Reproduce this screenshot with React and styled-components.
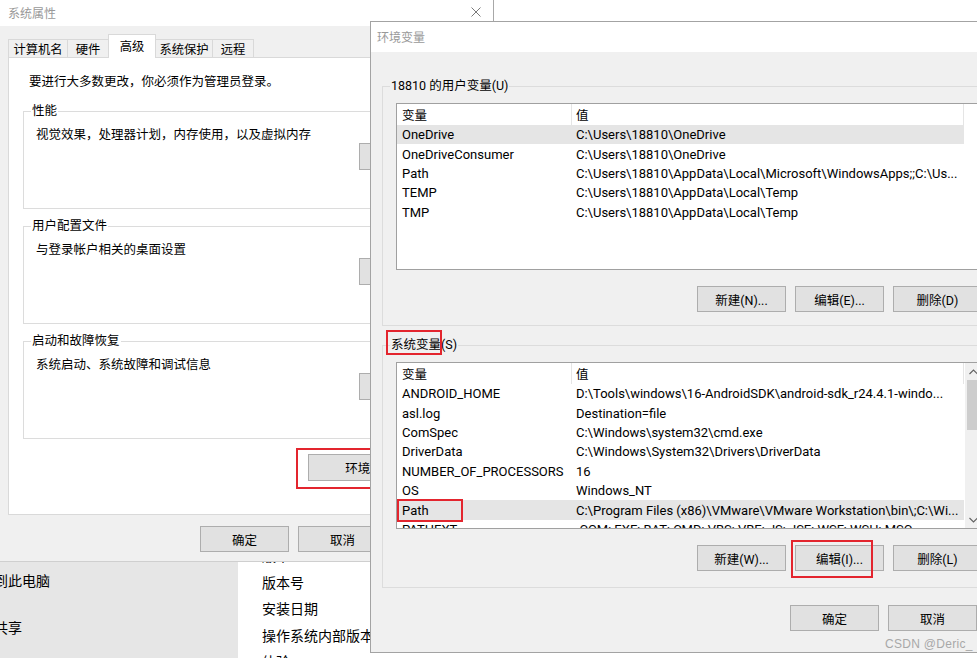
import React from 'react'
import styled, { createGlobalStyle } from 'styled-components'

const GlobalStyle = createGlobalStyle`
  html, body { margin: 0; padding: 0; background: #fff; }
  body { font-family: Roboto, "Noto Sans CJK SC", sans-serif; color: #000; }
`

const RED = '#e3252e'

const Desktop = styled.div`
  position: relative;
  width: 977px;
  height: 658px;
  overflow: hidden;
  background: #fff;
`

/* settings page behind the dialogs */
const SettingsPage = styled.section`
  position: absolute;
  left: 0;
  top: 540px;
  width: 620px;
  height: 118px;
  display: flex;
  font-size: 14px;
  z-index: 0;
`
const Sidebar = styled.nav`
  width: 238px;
  background: #e6e6e6;
  padding-top: 31px;
  overflow: hidden;
`
const NavItem = styled.div`
  margin-left: -34px;
  line-height: 20px;
  margin-bottom: 27px;
  white-space: nowrap;
`
const AboutList = styled.div`
  flex: 1;
  background: #fff;
  padding: 3px 0 0 24px;
`
const AboutItem = styled.div`
  line-height: 26.5px;
  white-space: nowrap;
`

/* shared window parts */
const TitleBar = styled.header`
  flex: none;
  height: ${p => p.$h}px;
  background: #fff;
  display: flex;
  align-items: center;
  justify-content: space-between;
  padding-left: ${p => p.$pl}px;
  padding-bottom: 2px;
  box-sizing: border-box;
  font-size: 12px;
  color: #999;
`
const CloseBox = styled.div`
  width: 34px;
  height: 100%;
  display: flex;
  align-items: center;
  justify-content: center;
`
const PushButton = styled.div`
  box-sizing: border-box;
  width: ${p => p.$w || 89}px;
  height: ${p => p.$h || 26}px;
  flex: none;
  background: #e1e1e1;
  border: 1px solid #adadad;
  display: flex;
  align-items: center;
  justify-content: center;
  font-size: 12.5px;
  white-space: nowrap;
  overflow: hidden;
`
const ButtonRow = styled.div`
  box-sizing: border-box;
  display: flex;
  justify-content: flex-end;
  gap: ${p => p.$gap || 9}px;
  margin-top: ${p => p.$mt || 0}px;
  padding-right: ${p => p.$pr || 0}px;
  width: ${p => (p.$w ? `${p.$w}px` : 'auto')};
`
const Group = styled.fieldset`
  box-sizing: border-box;
  margin: ${p => p.$mt || 0}px 0 0;
  min-width: 0;
  width: ${p => (p.$w ? `${p.$w}px` : 'auto')};
  height: ${p => (p.$h ? `${p.$h}px` : 'auto')};
  border: 1px solid #dcdcdc;
  padding: ${p => p.$pad};
  display: flex;
  flex-direction: column;
`
const Legend = styled.legend`
  margin-left: ${p => p.$ml}px;
  padding: 0 1px;
  font-size: 12.5px;
  line-height: 16px;
  white-space: nowrap;
`
const Mark = styled.span`
  position: relative;
  display: inline-block;
  &::after {
    content: '';
    position: absolute;
    top: ${p => p.$t}px;
    right: ${p => p.$r}px;
    bottom: ${p => p.$b}px;
    left: ${p => p.$l}px;
    border: 2px solid ${RED};
    pointer-events: none;
    z-index: 3;
  }
`

/* system properties window */
const SysWindow = styled.section`
  position: absolute;
  z-index: 1;
  left: 0;
  top: 0;
  width: 494px;
  height: 562px;
  box-sizing: border-box;
  background: #f0f0f0;
  border-right: 1px solid #a8a8a8;
  border-bottom: 1px solid #cfcfcf;
  display: flex;
  flex-direction: column;
`
const SysBody = styled.div`
  padding: 8px 8px 0 8px;
  display: flex;
  flex-direction: column;
`
const TabStrip = styled.div`
  display: flex;
  align-items: flex-end;
  height: 24px;
  margin-bottom: -1px;
  position: relative;
  z-index: 1;
`
const Tab = styled.div`
  box-sizing: border-box;
  width: ${p => p.$w}px;
  height: ${p => (p.$active ? 24 : 18)}px;
  margin-bottom: ${p => (p.$active ? 0 : 1)}px;
  margin-left: -1px;
  &:first-child { margin-left: 0; }
  background: ${p => (p.$active ? '#fff' : '#f0f0f0')};
  border: 1px solid #d9d9d9;
  border-bottom: none;
  font-size: 12.3px;
  display: flex;
  align-items: ${p => (p.$active ? 'flex-start' : 'center')};
  padding-top: ${p => (p.$active ? 2 : 0)}px;
  justify-content: center;
  position: relative;
  z-index: ${p => (p.$active ? 2 : 1)};
`
const TabPanel = styled.div`
  box-sizing: border-box;
  height: 458px;
  background: #fff;
  border: 1px solid #d9d9d9;
  padding: 16px 14px 0 14px;
  display: flex;
  flex-direction: column;
`
const Intro = styled.p`
  margin: 0;
  padding-left: 6px;
  font-size: 12.5px;
  line-height: 16px;
`
const GroupText = styled.div`
  padding-top: 8px;
  font-size: 12.5px;
  line-height: 16px;
`
const GroupButton = styled(PushButton)`
  margin-top: auto;
  align-self: flex-end;
`

/* environment variables window */
const EnvWindow = styled.section`
  position: absolute;
  z-index: 2;
  left: 370px;
  top: 21px;
  width: 640px;
  height: 632px;
  box-sizing: border-box;
  background: #f0f0f0;
  border: 1px solid #a3a3a3;
  display: flex;
  flex-direction: column;
`
const EnvBody = styled.div`
  padding: 26px 0 0 11px;
  display: flex;
  flex-direction: column;
`
const ListBox = styled.div`
  box-sizing: border-box;
  margin-top: 9px;
  height: 167px;
  border: 1px solid #a0a0a0;
  background: #fff;
  display: flex;
  overflow: hidden;
`
const ListMain = styled.div`
  flex: 1;
  min-width: 0;
  overflow: hidden;
`
const Columns = styled.div`
  display: grid;
  grid-template-columns: 175px 392px;
  height: ${p => p.$h}px;
  align-items: center;
  background: ${p => (p.$selected ? '#e5e5e5' : 'transparent')};
  width: 567px;
  font-size: 13px;
`
const HeadCell = styled.div`
  height: 100%;
  box-sizing: border-box;
  border-right: 1px solid #e5e5e5;
  padding-left: ${p => p.$pl}px;
  display: flex;
  align-items: center;
  font-size: 12.5px;
`
const Cell = styled.div`
  padding-left: ${p => p.$pl}px;
  padding-top: 1px;
  white-space: nowrap;
  overflow: ${p => (p.$clip ? 'hidden' : 'visible')};
  line-height: 16px;
`
const ScrollBar = styled.div`
  width: 17px;
  flex: none;
  background: #f0f0f0;
  display: flex;
  flex-direction: column;
`
const ScrollArrow = styled.div`
  height: 17px;
  display: flex;
  align-items: center;
  justify-content: center;
`
const ScrollTrack = styled.div`
  flex: 1;
  padding: 0 2px;
`
const ScrollThumb = styled.div`
  height: 50px;
  background: #cdcdcd;
`
const Watermark = styled.div`
  position: absolute;
  z-index: 5;
  left: 885px;
  top: 637px;
  font-family: "Liberation Sans", Arial, sans-serif;
  font-size: 12px;
  color: #a8a8a8;
  letter-spacing: 0.3px;
`

const CloseIcon = () => (
  <svg width="10" height="10" viewBox="0 0 10 10">
    <path d="M0.5 0.5 L9.5 9.5 M9.5 0.5 L0.5 9.5" stroke="#7a7a7a" strokeWidth="1" fill="none" />
  </svg>
)

const Chevron = ({ down }) => (
  <svg width="9" height="6" viewBox="0 0 9 6">
    <polyline
      points={down ? '0.5,1 4.5,5 8.5,1' : '0.5,5 4.5,1 8.5,5'}
      stroke="#606060"
      strokeWidth="1.1"
      fill="none"
    />
  </svg>
)

const userVars = [
  { name: 'OneDrive', value: 'C:\\Users\\18810\\OneDrive', selected: true },
  { name: 'OneDriveConsumer', value: 'C:\\Users\\18810\\OneDrive' },
  { name: 'Path', value: 'C:\\Users\\18810\\AppData\\Local\\Microsoft\\WindowsApps;;C:\\Us...' },
  { name: 'TEMP', value: 'C:\\Users\\18810\\AppData\\Local\\Temp' },
  { name: 'TMP', value: 'C:\\Users\\18810\\AppData\\Local\\Temp' },
]

const sysVars = [
  { name: 'ANDROID_HOME', value: 'D:\\Tools\\windows\\16-AndroidSDK\\android-sdk_r24.4.1-windo...' },
  { name: 'asl.log', value: 'Destination=file' },
  { name: 'ComSpec', value: 'C:\\Windows\\system32\\cmd.exe' },
  { name: 'DriverData', value: 'C:\\Windows\\System32\\Drivers\\DriverData' },
  { name: 'NUMBER_OF_PROCESSORS', value: '16' },
  { name: 'OS', value: 'Windows_NT' },
  { name: 'Path', value: 'C:\\Program Files (x86)\\VMware\\VMware Workstation\\bin\\;C:\\Wi...', selected: true, marked: true },
  { name: 'PATHEXT', value: '.COM;.EXE;.BAT;.CMD;.VBS;.VBE;.JS;.JSE;.WSF;.WSH;.MSC' },
]

const tabs = [
  { label: '计算机名', w: 60 },
  { label: '硬件', w: 42 },
  { label: '高级', w: 48, active: true },
  { label: '系统保护', w: 58 },
  { label: '远程', w: 42 },
]

const VarList = ({ rows, scroll }) => (
  <ListBox>
    <ListMain>
      <Columns $h={21}>
        <HeadCell $pl={5}>变量</HeadCell>
        <HeadCell $pl={4}>值</HeadCell>
      </Columns>
      {rows.map((r, i) => (
        <Columns key={i} $h={19.4} $selected={r.selected}>
          <Cell $pl={5}>
            {r.marked ? <Mark $t={-4} $r={-34} $b={-3} $l={-5}>{r.name}</Mark> : r.name}
          </Cell>
          <Cell $pl={4} $clip>{r.value}</Cell>
        </Columns>
      ))}
    </ListMain>
    {scroll && (
      <ScrollBar>
        <ScrollArrow><Chevron /></ScrollArrow>
        <ScrollTrack><ScrollThumb /></ScrollTrack>
        <ScrollArrow><Chevron down /></ScrollArrow>
      </ScrollBar>
    )}
  </ListBox>
)

export default function App() {
  return (
    <>
      <GlobalStyle />
      <Desktop>
        <SettingsPage>
          <Sidebar>
            <NavItem>投影到此电脑</NavItem>
            <NavItem>体验共享</NavItem>
          </Sidebar>
          <AboutList>
            <AboutItem>版本</AboutItem>
            <AboutItem>版本号</AboutItem>
            <AboutItem>安装日期</AboutItem>
            <AboutItem>操作系统内部版本</AboutItem>
            <AboutItem>体验</AboutItem>
          </AboutList>
        </SettingsPage>

        <SysWindow>
          <TitleBar $h={26} $pl={8}>
            <span>系统属性</span>
            <CloseBox><CloseIcon /></CloseBox>
          </TitleBar>
          <SysBody>
            <TabStrip>
              {tabs.map(t => (
                <Tab key={t.label} $w={t.w} $active={t.active}>{t.label}</Tab>
              ))}
            </TabStrip>
            <TabPanel>
              <Intro>要进行大多数更改，你必须作为管理员登录。</Intro>
              <Group $mt={13} $h={106} $pad="0 16px 13px 12px">
                <Legend $ml={-5}>性能</Legend>
                <GroupText>视觉效果，处理器计划，内存使用，以及虚拟内存</GroupText>
                <GroupButton $w={94} $h={27}>设置(S)...</GroupButton>
              </Group>
              <Group $mt={9} $h={106} $pad="0 16px 13px 12px">
                <Legend $ml={-5}>用户配置文件</Legend>
                <GroupText>与登录帐户相关的桌面设置</GroupText>
                <GroupButton $w={94} $h={27}>设置(E)...</GroupButton>
              </Group>
              <Group $mt={9} $h={106} $pad="0 16px 13px 12px">
                <Legend $ml={-5}>启动和故障恢复</Legend>
                <GroupText>系统启动、系统故障和调试信息</GroupText>
                <GroupButton $w={94} $h={27}>设置(T)...</GroupButton>
              </Group>
              <ButtonRow $mt={15} $pr={10}>
                <Mark $t={-6} $r={-8} $b={-8} $l={-12}>
                  <PushButton $w={152} $h={27}>环境变量(N)...</PushButton>
                </Mark>
              </ButtonRow>
            </TabPanel>
            <ButtonRow $mt={11}>
              <PushButton>确定</PushButton>
              <PushButton>取消</PushButton>
              <PushButton>应用(A)</PushButton>
            </ButtonRow>
          </SysBody>
        </SysWindow>

        <EnvWindow>
          <TitleBar $h={30} $pl={6}>
            <span>环境变量</span>
          </TitleBar>
          <EnvBody>
            <Group $w={615} $pad="0 13px 13px 13px">
              <Legend $ml={-6}>18810 的用户变量(U)</Legend>
              <VarList rows={userVars} />
              <ButtonRow $mt={16} $pr={1}>
                <PushButton>新建(N)...</PushButton>
                <PushButton>编辑(E)...</PushButton>
                <PushButton>删除(D)</PushButton>
              </ButtonRow>
            </Group>
            <Group $w={615} $mt={11} $pad="0 13px 16px 13px">
              <Legend $ml={-6}>
                <Mark $t={-7} $r={-1} $b={-2} $l={-5}>系统变量</Mark>(S)
              </Legend>
              <VarList rows={sysVars} scroll />
              <ButtonRow $mt={16} $pr={1}>
                <PushButton>新建(W)...</PushButton>
                <Mark $t={-5} $r={11} $b={-7} $l={-4}>
                  <PushButton>编辑(I)...</PushButton>
                </Mark>
                <PushButton>删除(L)</PushButton>
              </ButtonRow>
            </Group>
            <ButtonRow $mt={17} $pr={20} $w={615}>
              <PushButton>确定</PushButton>
              <PushButton>取消</PushButton>
            </ButtonRow>
          </EnvBody>
        </EnvWindow>

        <Watermark>CSDN @Deric_</Watermark>
      </Desktop>
    </>
  )
}
